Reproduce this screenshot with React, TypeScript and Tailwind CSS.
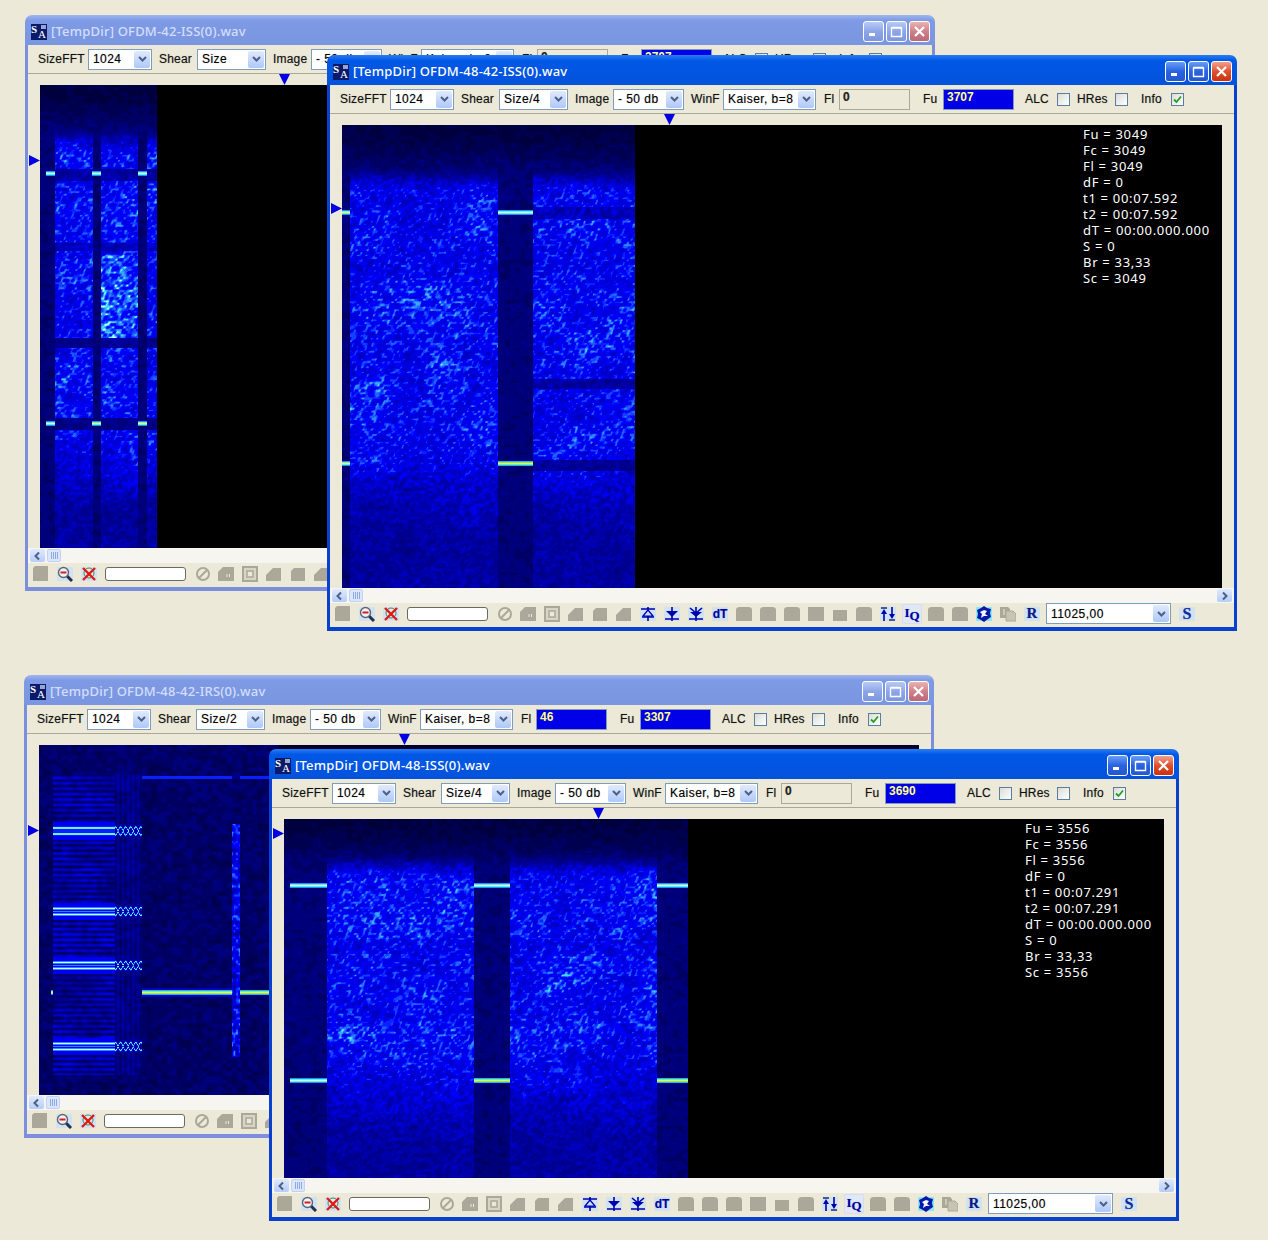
import React from 'react';

// --- spectrogram drawing helpers ---
const RAMP = ['#00001c', '#00002c', '#00003e', '#000050', '#000064', '#00007a', '#000090', '#0000a8', '#0000c0', '#0000d8', '#0000ee', '#0000ff', '#0a20ff', '#1440ff', '#2060ff', '#2c84ff', '#38a8ff', '#48d0ff', '#70f0ff', '#c0ffff'];

function hash(a: number, b: number, seed: number) {
  let h = (Math.imul(a, 374761393) + Math.imul(b, 668265263) + Math.imul(seed, 1013904223)) | 0;
  h = Math.imul(h ^ (h >>> 13), 1274126177);
  h = Math.imul(h ^ (h >>> 15), 2246822519);
  return ((h ^ (h >>> 16)) >>> 0) / 4294967296;
}

function noise(x: number, y: number, seed: number) {
  const ix = Math.floor(x);
  const iy = Math.floor(y);
  let fx = x - ix;
  let fy = y - iy;
  fx = fx * fx * (3 - 2 * fx);
  fy = fy * fy * (3 - 2 * fy);
  const top = hash(ix, iy, seed) * (1 - fx) + hash(ix + 1, iy, seed) * fx;
  const bot = hash(ix, iy + 1, seed) * (1 - fx) + hash(ix + 1, iy + 1, seed) * fx;
  return top * (1 - fy) + bot * fy;
}

function step(a: number, b: number, v: number) {
  const t = Math.min(1, Math.max(0, (v - a) / (b - a)));
  return t * t * (3 - 2 * t);
}

function buildPaths(w: number, h: number, cell: number, fn: (x: number, y: number) => number) {
  const parts: string[][] = RAMP.map(() => []);
  for (let y = 0; y < h; y += cell) {
    let start = 0;
    let cur = -1;
    for (let x = 0; x <= w; x += cell) {
      const idx = x < w ? Math.max(0, Math.min(RAMP.length - 1, Math.floor(fn(x, y) * RAMP.length))) : -2;
      if (idx !== cur) {
        if (cur >= 0) parts[cur].push(`M${start} ${y}h${x - start}v${cell}h${start - x}z`);
        start = x;
        cur = idx;
      }
    }
  }
  return parts.map((p) => p.join(''));
}

type Ofdm = {
  cols: [number, number][];
  start: number;
  fade: [number, number];
  // y0, y1, gain, and the x range the band holds for
  bands: [number, number, number, number, number][];
  seed: number;
  floor: number;
};

function ofdm(cfg: Ofdm) {
  return (x: number, y: number) => {
    const dim = 0.09 + 0.13 * step(0, 55, y) + 0.09 * noise(x / 5, y / 4, cfg.seed + 3);
    const inside = cfg.cols.some(([a, b]) => x >= a && x < b);
    if (!inside) return dim;
    let level = step(cfg.start - 12, cfg.start + 16, y) * (1 - (1 - cfg.floor) * step(cfg.fade[0], cfg.fade[1], y));
    for (const [a, b, f, x0, x1] of cfg.bands) {
      if (y >= a && y < b && x >= x0 && x < x1) level *= f;
    }
    const speck = noise(x / 2.8 + y * 0.12, y / 2.6, cfg.seed);
    const coarse = noise(x / 34, y / 24, cfg.seed + 1);
    return dim + level * (0.2 + 0.34 * speck * speck) * (0.8 + 0.4 * coarse);
  };
}

function specC(x: number, y: number) {
  let v = 0.17 + 0.12 * noise(x / 5, y / 4, 9);
  const groups = [85.5, 166, 220, 301];
  const near = Math.min(...groups.map((g) => Math.abs(y - g)));
  const gain = y > 28 && y < 330 ? 1 : 0;
  if (x >= 14 && x < 76 && gain) {
    const row = 0.5 + 0.5 * Math.cos((y * 2 * Math.PI) / 5.4);
    v += row * (0.1 + 0.22 * noise(x / 24, y / 14, 5));
    if (near < 9) v = Math.max(v, 0.5);
    if (near < 5) v = 0.55 + 0.42 * (0.5 + 0.5 * Math.cos(((near - 3) * Math.PI) / 2));
  }
  if (x >= 76 && x < 103) {
    // the pair of lines closes into a row of small eyes
    const edge = 4 * Math.abs(Math.cos(x * 0.62));
    if (near < 7) v = Math.max(v, 0.3 + 0.65 * Math.exp(-((near - edge) * (near - edge)) / 1.4));
    else if (gain) v += 0.1 * Math.abs(Math.sin(x * 0.62));
  }
  if (x >= 193 && x < 201 && y > 78 && y < 312) {
    v = 0.28 + 0.42 * Math.pow(noise(x / 2.5, y / 3, 7), 1.3) + 0.12 * Math.abs(Math.sin(y * 0.3));
  }
  if (y >= 31 && y < 34 && x >= 103) v = x >= 193 && x < 201 ? 0.3 : 0.6;
  if (y >= 243 && y < 252 && x >= 103 && x < 193) v = 0.42;
  return v;
}

// [x, y, width, kind] - the carrier lines, drawn on top of the noise
type Line = [number, number, number, 'cyan' | 'lime' | 'yellow'];

function Spectrogram({ w, h, cell, fn, lines }: { w: number; h: number; cell: number; fn: (x: number, y: number) => number; lines: Line[] }) {
  const paths = React.useMemo(() => buildPaths(w, h, cell, fn), [w, h, cell, fn]);
  return (
    <svg width={w} height={h} viewBox={`0 0 ${w} ${h}`} shapeRendering="crispEdges" className="absolute left-0 top-0">
      <g className="blur-[0.5px]">
        {paths.map((d, i) => (d ? <path key={i} d={d} fill={RAMP[i]} /> : null))}
      </g>
      {lines.map(([x, y, lw, kind], i) => (
        <g key={i}>
          <rect x={x} y={y - 2} width={lw} height={5} fill={kind === 'yellow' ? '#28b0f0' : '#1c90ff'} />
          <rect x={x} y={y - 1} width={lw} height={3} fill={kind === 'yellow' ? '#70f0a0' : kind === 'lime' ? '#70f8c0' : '#60f0f0'} />
          <rect x={x} y={y} width={lw} height={1} fill={kind === 'yellow' ? '#f8f428' : kind === 'lime' ? '#e0ff90' : '#d8ffe0'} />
        </g>
      ))}
    </svg>
  );
}

const fnA = ofdm({
  cols: [[15, 53], [61, 98], [107, 117]],
  start: 52,
  fade: [330, 440],
  bands: [[84, 96, 0.35, 0, 117], [158, 166, 0.5, 0, 117], [170, 255, 1.35, 55, 98], [253, 263, 0.2, 0, 117], [333, 345, 0.12, 0, 117]],
  seed: 11,
  floor: 0.3,
});
const fnB = ofdm({
  cols: [[8, 156], [191, 293]],
  start: 52,
  fade: [300, 420],
  bands: [[82, 94, 0.5, 191, 293], [254, 264, 0.35, 191, 293], [335, 346, 0.3, 191, 293]],
  seed: 21,
  floor: 0.3,
});
const fnD = ofdm({
  cols: [[43, 190], [226, 373]],
  start: 44,
  fade: [210, 335],
  bands: [[120, 135, 0.85, 0, 404]],
  seed: 31,
  floor: 0.3,
});

// --- toolbar icons ---
function Tile({ d, children }: { d: string; children?: React.ReactNode }) {
  return (
    <svg width="16" height="16" viewBox="0 0 16 16" className="shrink-0">
      <path d={d} fill="#aca899" />
      {children}
    </svg>
  );
}

const doc = 'M0 15V2L2 0H15V15Z';
const folder = 'M0 15V6L5 1H16V15Z';
const wedge = 'M0 15V9L7 2H15V15Z';
const wedge2 = 'M1 15V5L4 2H15V15Z';
const tile = 'M0 15V4Q0 1 4 1H12Q16 1 16 4V15Z';
const square = 'M0 1H16V15H0Z';
const small = 'M1 4H15V15H1Z';

function IconBg({ children, className = '' }: { children: React.ReactNode; className?: string }) {
  return (
    <svg width="16" height="16" viewBox="0 0 16 16" className={`shrink-0 ${className}`}>
      <rect x="0" y="1" width="16" height="14" fill="#c8e0fb" opacity="0.75" />
      {children}
    </svg>
  );
}

const Magnifier = () => (
  <IconBg>
    <path d="M10 10L15 15" stroke="#24304a" strokeWidth="3" />
    <circle cx="6.5" cy="6.5" r="5" fill="#f4f2ee" stroke="#5a6478" strokeWidth="1.4" />
    <path d="M3.5 6.5H9.5" stroke="#d02030" strokeWidth="2" />
  </IconBg>
);

const RedX = () => (
  <IconBg>
    <circle cx="8" cy="7" r="5" fill="#e8e8e0" stroke="#3a8a6a" strokeWidth="1" />
    <path d="M2 2L14 14M14 2L2 14" stroke="#e01818" strokeWidth="2.4" />
  </IconBg>
);

const NoSign = () => (
  <svg width="16" height="16" viewBox="0 0 16 16" className="shrink-0">
    <circle cx="8" cy="8" r="6" fill="none" stroke="#aca899" strokeWidth="2" />
    <path d="M4 12L12 4" stroke="#aca899" strokeWidth="2" />
  </svg>
);

const UpIcon = () => (
  <IconBg>
    <path d="M1 3H15M8 1V15M2 11H14" stroke="#0000b0" strokeWidth="1.6" fill="none" />
    <path d="M8 4L3 10H13Z" fill="#bfe0ff" stroke="#0000b0" strokeWidth="1.2" />
  </IconBg>
);

const DownIcon = () => (
  <IconBg>
    <path d="M8 1V15M1 13H15" stroke="#0000b0" strokeWidth="1.6" fill="none" />
    <path d="M2 5H14L8 11Z" fill="#0000b0" />
  </IconBg>
);

const DoubleIcon = () => (
  <IconBg>
    <path d="M8 1V15M2 2L8 7L14 2M1 13H15" stroke="#0000b0" strokeWidth="1.6" fill="none" />
    <path d="M2 6H14L8 11Z" fill="#0000b0" />
  </IconBg>
);

const SwapIcon = () => (
  <IconBg>
    <path d="M1 2H7M9 14H15" stroke="#103080" strokeWidth="1.4" />
    <path d="M4 15V6M12 1V10" stroke="#0000b0" strokeWidth="1.6" fill="none" />
    <path d="M4 3L1 8H7ZM12 13L9 8H15Z" fill="#0000b0" />
  </IconBg>
);

const StarIcon = () => (
  <svg width="16" height="16" viewBox="0 0 16 16" className="shrink-0">
    <rect x="0" y="1" width="16" height="14" fill="#60e8ff" opacity="0.7" />
    <path d="M8 0L11 2L15 3L14 7L15 11L12 13L8 16L5 14L1 12L2 8L1 4L5 2Z" fill="#0818a8" />
    <path d="M8 4L11 5L9 8L12 10L8 10L5 12L6 8L4 6Z" fill="#f4f8ff" />
  </svg>
);

const PaperIcon = () => (
  <svg width="16" height="16" viewBox="0 0 16 16" className="shrink-0">
    <path d="M0 1H8L10 3V12H0Z" fill="#aca899" />
    <path d="M6 5H13L16 8V15H6Z" fill="#c8c4b4" stroke="#aca899" strokeWidth="1" />
    <path d="M4 3V9" stroke="#ece9d8" strokeWidth="1" />
  </svg>
);

// --- little form parts ---
const Chevron = ({ dir = 'down' }: { dir?: 'down' | 'left' | 'right' }) => {
  const pts = dir === 'down' ? '3,4 6.5,7.5 10,4' : dir === 'left' ? '8,2.5 4.5,6 8,9.5' : '5,2.5 8.5,6 5,9.5';
  return (
    <svg width="13" height="12" viewBox="0 0 13 12">
      <polyline points={pts} fill="none" stroke="#4d6185" strokeWidth="2" />
    </svg>
  );
};

function Combo({ value, className }: { value: string; className: string }) {
  return (
    <div className={`flex h-[21px] shrink-0 items-center justify-between border border-[#7f9db9] bg-white p-px ${className}`}>
      <span className="pl-[3px] tracking-[0.45px] text-black">{value}</span>
      <span className="flex h-[17px] w-[16px] items-center justify-center rounded-[2px] bg-linear-to-b from-[#e1eafe] to-[#aec8f7]">
        <Chevron />
      </span>
    </div>
  );
}

function Field({ value, on }: { value: string; on: boolean }) {
  return (
    <div className={`h-[21px] w-[71px] shrink-0 border pl-[3px] font-bold leading-[15px] tracking-normal ${on ? 'border-[#7f9db9] bg-[#0000e8] text-[#ffff9c]' : 'border-[#aca899] bg-[#ece9d8] text-[#222]'}`}>
      {value}
    </div>
  );
}

function Check({ on }: { on?: boolean }) {
  return (
    <div className="flex h-[13px] w-[13px] shrink-0 items-center justify-center border border-[#5a7ea0] bg-linear-to-br from-[#dcdcd6] to-white">
      {on && (
        <svg width="9" height="9" viewBox="0 0 9 9">
          <path d="M1 4.5L3.5 7L8 1.5" fill="none" stroke="#21a121" strokeWidth="1.8" />
        </svg>
      )}
    </div>
  );
}

function CaptionButton({ kind, active }: { kind: 'min' | 'max' | 'close'; active: boolean }) {
  const tone =
    kind === 'close'
      ? active
        ? 'from-[#f0a08c] via-[#e0502c] to-[#c83010]'
        : 'from-[#eab4b0] via-[#d08088] to-[#b86878]'
      : active
        ? 'from-[#6a9cf4] via-[#2a62e0] to-[#2458d0]'
        : 'from-[#b8caf4] via-[#8ea6e8] to-[#7c96e0]';
  return (
    <div className={`flex h-[21px] w-[21px] items-center justify-center rounded-[3px] border border-white bg-linear-to-b ${tone}`}>
      <svg width="13" height="13" viewBox="0 0 13 13">
        {kind === 'min' && <rect x="2" y="8" width="6" height="3" fill="#fff" />}
        {kind === 'max' && <path d="M1.5 3H11.5V11.5H1.5ZM1.5 2.5H11.5" fill="none" stroke="#fff" strokeWidth="1.4" />}
        {kind === 'close' && <path d="M2 2L11 11M11 2L2 11" stroke="#fff" strokeWidth="2.2" />}
      </svg>
    </div>
  );
}

function Logo() {
  return (
    <div className="relative h-[16px] w-[16px] shrink-0 bg-[#0a1a6a] font-['Liberation_Serif',serif] tracking-normal text-white">
      <span className="absolute left-0 top-0 text-[11px] font-bold leading-[11px]">S</span>
      <span className="absolute left-[7px] top-[5px] text-[11px] leading-[11px]">A</span>
      <span className="absolute right-[1px] top-[1px] h-[4px] w-[5px] bg-[#9aa4cc]" />
    </div>
  );
}

const Triangle = ({ dir, className }: { dir: 'down' | 'right'; className: string }) => (
  <svg width="11" height="11" viewBox="0 0 11 11" className={`absolute ${className}`}>
    <path d={dir === 'down' ? 'M0 0H11L5.5 11Z' : 'M0 0L11 5.5L0 11Z'} fill="#0000e0" />
  </svg>
);

type WinProps = {
  pos: string;
  active: boolean;
  title: string;
  shear: string;
  fl: string;
  flOn?: boolean;
  fu: string;
  topArrow: string;
  leftArrow: string;
  imageBg?: string;
  info?: string[];
  children: React.ReactNode;
};

function Win({ pos, active, title, shear, fl, flOn = false, fu, topArrow, leftArrow, imageBg = 'bg-black', info, children }: WinProps) {
  return (
    <div className={`absolute flex flex-col font-['Liberation_Sans',sans-serif] text-[12px] tracking-[0.2px] text-[#111] [text-shadow:0_0_1px_rgba(0,0,0,0.35)] ${pos}`}>
      <div className={`flex h-[30px] shrink-0 items-center rounded-t-[7px] pl-[6px] pr-[5px] pt-[3px] bg-linear-to-b [text-shadow:none] ${active ? 'from-[#2a7cf2] via-[#0058e6] via-[18%] to-[#0352dc]' : 'from-[#a0b6ee] via-[#7e9ae4] via-[18%] to-[#7b96e0]'}`}>
        <Logo />
        <span className={`ml-[4px] font-['Noto_Sans',sans-serif] text-[13px] font-medium tracking-[0.2px] ${active ? 'text-white' : 'text-[#d3defc]'}`}>{title}</span>
        <div className="ml-auto flex gap-[2px]">
          <CaptionButton kind="min" active={active} />
          <CaptionButton kind="max" active={active} />
          <CaptionButton kind="close" active={active} />
        </div>
      </div>
      <div className={`flex min-h-0 flex-1 flex-col border-x-[3px] border-b-[4px] bg-[#ece9d8] ${active ? 'border-[#0840cf]' : 'border-[#7b8fdc]'}`}>
        <div className="flex h-[29px] shrink-0 items-center border-b border-[#aca899] pl-[10px]">
          <span className="w-[50px] shrink-0">SizeFFT</span>
          <Combo value="1024" className="w-[64px]" />
          <span className="ml-[7px] w-[38px] shrink-0">Shear</span>
          <Combo value={shear} className="w-[69px]" />
          <span className="ml-[7px] w-[38px] shrink-0">Image</span>
          <Combo value="- 50 db" className="w-[71px]" />
          <span className="ml-[7px] w-[32px] shrink-0">WinF</span>
          <Combo value="Kaiser, b=8" className="w-[93px]" />
          <span className="ml-[8px] w-[15px] shrink-0">Fl</span>
          <Field value={fl} on={flOn} />
          <span className="ml-[13px] w-[20px] shrink-0">Fu</span>
          <Field value={fu} on />
          <span className="ml-[11px] w-[32px] shrink-0">ALC</span>
          <Check />
          <span className="ml-[7px] w-[38px] shrink-0">HRes</span>
          <Check />
          <span className="ml-[13px] w-[30px] shrink-0">Info</span>
          <Check on />
        </div>
        <div className="relative h-[11px] shrink-0">
          <Triangle dir="down" className={`top-0 ${topArrow}`} />
        </div>
        <div className={`relative mx-[12px] min-h-0 flex-1 ${imageBg}`}>
          {children}
          <Triangle dir="right" className={`left-[-11px] ${leftArrow}`} />
          {info && (
            <div className="absolute left-[741px] top-px font-['Noto_Sans',sans-serif] text-[13px] font-normal leading-[16px] tracking-[0.7px] text-white [text-shadow:none]">
              {info.map((line) => (
                <div key={line}>{line}</div>
              ))}
            </div>
          )}
        </div>
        <div className="flex h-[15px] shrink-0 items-center justify-between bg-[#f6f5ef] px-[2px]">
          <div className="flex items-center gap-[2px]">
            <span className="flex h-[13px] w-[15px] items-center justify-center rounded-[2px] bg-linear-to-b from-[#e1eafe] to-[#b4cdf8]">
              <Chevron dir="left" />
            </span>
            <span className="flex h-[13px] w-[14px] items-center justify-center rounded-[2px] border border-[#c0d2f8] bg-[#dce6fa]">
              <span className="h-[7px] w-[7px] bg-[repeating-linear-gradient(90deg,#8ea8e0_0,#8ea8e0_1px,transparent_1px,transparent_2px)]" />
            </span>
          </div>
          <span className="flex h-[13px] w-[15px] items-center justify-center rounded-[2px] bg-linear-to-b from-[#e1eafe] to-[#b4cdf8]">
            <Chevron dir="right" />
          </span>
        </div>
        <div className="flex h-[24px] shrink-0 items-center overflow-hidden pb-[3px] pl-[5px]">
          <div className="flex items-center gap-[8px]">
            <Tile d={doc} />
            <Magnifier />
            <RedX />
          </div>
          <div className="ml-[8px] h-[14px] w-[81px] shrink-0 rounded-[3px] border border-[#6a6a62] bg-white" />
          <div className="ml-[9px] mr-[7px]">
            <NoSign />
          </div>
          <div className="flex items-center gap-[8px]">
            <Tile d={folder}>
              <path d="M9 8V11M11.5 8V11" stroke="#ece9d8" />
            </Tile>
            <svg width="16" height="16" viewBox="0 0 16 16" className="shrink-0">
              <path d="M1 1H15V15H1Z" fill="#d8d5c4" stroke="#aca899" strokeWidth="2" />
              <path d="M5 5H11V11H5Z" fill="#ece9d8" stroke="#aca899" strokeWidth="1.5" />
            </svg>
            <Tile d={wedge} />
            <Tile d={wedge2} />
            <Tile d={wedge} />
            <UpIcon />
            <DownIcon />
            <DoubleIcon />
            <span className="flex h-[14px] w-[16px] shrink-0 items-center justify-center bg-[#c8e0fb]/75 text-[12px] font-bold tracking-normal text-[#0000a8]">dT</span>
            <Tile d={tile} />
            <Tile d={tile} />
            <Tile d={tile} />
            <Tile d={square} />
            <Tile d={small} />
            <Tile d={tile} />
            <SwapIcon />
            <span className="-mx-[2px] flex h-[20px] w-[20px] shrink-0 items-start justify-center rounded-[2px] border border-[#d8dcec] bg-[#e0e9f8] font-['Liberation_Serif',serif] text-[13px] font-bold leading-[15px] tracking-normal text-[#0000a8]">
              I<span className="mt-[3px]">Q</span>
            </span>
            <Tile d={tile} />
            <Tile d={tile} />
            <StarIcon />
            <PaperIcon />
            <span className="flex h-[14px] w-[16px] shrink-0 items-center justify-center bg-[#c8e0fb]/75 font-['Liberation_Serif',serif] text-[15px] font-bold tracking-normal text-[#0a1a8c]">R</span>
          </div>
          <Combo value="11025,00" className="ml-[6px] w-[125px]" />
          <span className="ml-[8px] flex h-[14px] w-[16px] shrink-0 items-center justify-center bg-[#c8e0fb]/75 font-['Liberation_Serif',serif] text-[16px] font-bold tracking-normal text-[#0a2aa8]">S</span>
        </div>
      </div>
    </div>
  );
}

const infoB = ['Fu = 3049', 'Fc = 3049', 'Fl = 3049', 'dF = 0', 't1 = 00:07.592', 't2 = 00:07.592', 'dT = 00:00.000.000', 'S = 0', 'Br = 33,33', 'Sc = 3049'];
const infoD = ['Fu = 3556', 'Fc = 3556', 'Fl = 3556', 'dF = 0', 't1 = 00:07.291', 't2 = 00:07.291', 'dT = 00:00.000.000', 'S = 0', 'Br = 33,33', 'Sc = 3556'];

export default function App() {
  return (
    <div className="relative h-[1240px] w-[1268px] overflow-hidden bg-[#ece9d8]">
      <Win
        pos="left-[25px] top-[15px] h-[576px] w-[910px]"
        active={false}
        title="[TempDir] OFDM-42-ISS(0).wav"
        shear="Size"
        fl="0"
        fu="3707"
        topArrow="left-[251px]"
        leftArrow="top-[70px]"
      >
        <Spectrogram
          w={117}
          h={463}
          cell={1}
          fn={fnA}
          lines={[[6, 88, 9, 'cyan'], [52, 88, 9, 'cyan'], [98, 88, 9, 'cyan'], [6, 338, 9, 'cyan'], [52, 338, 9, 'lime'], [98, 338, 9, 'lime']]}
        />
      </Win>
      <Win
        pos="left-[327px] top-[55px] h-[576px] w-[910px]"
        active
        title="[TempDir] OFDM-48-42-ISS(0).wav"
        shear="Size/4"
        fl="0"
        fu="3707"
        topArrow="left-[334px]"
        leftArrow="top-[78px]"
        info={infoB}
      >
        <Spectrogram
          w={293}
          h={463}
          cell={1}
          fn={fnB}
          lines={[[0, 87, 8, 'lime'], [156, 87, 35, 'cyan'], [0, 338, 8, 'lime'], [156, 338, 35, 'yellow']]}
        />
      </Win>
      <Win
        pos="left-[24px] top-[675px] h-[463px] w-[910px]"
        active={false}
        title="[TempDir] OFDM-48-42-IRS(0).wav"
        shear="Size/2"
        fl="46"
        flOn
        fu="3307"
        topArrow="left-[372px]"
        leftArrow="top-[80px]"
        imageBg="bg-[#00002c]"
      >
        <Spectrogram
          w={240}
          h={350}
          cell={1}
          fn={specC}
          lines={[[103, 247, 90, 'yellow'], [201, 247, 30, 'yellow'], [12, 247, 2, 'lime']]}
        />
      </Win>
      <Win
        pos="left-[269px] top-[749px] h-[472px] w-[910px]"
        active
        title="[TempDir] OFDM-48-ISS(0).wav"
        shear="Size/4"
        fl="0"
        fu="3690"
        topArrow="left-[321px]"
        leftArrow="top-[9px]"
        info={infoD}
      >
        <Spectrogram
          w={404}
          h={359}
          cell={1}
          fn={fnD}
          lines={[[6, 66, 37, 'cyan'], [190, 66, 36, 'cyan'], [373, 66, 31, 'cyan'], [6, 261, 37, 'cyan'], [190, 261, 36, 'yellow'], [373, 261, 31, 'yellow']]}
        />
      </Win>
    </div>
  );
}
